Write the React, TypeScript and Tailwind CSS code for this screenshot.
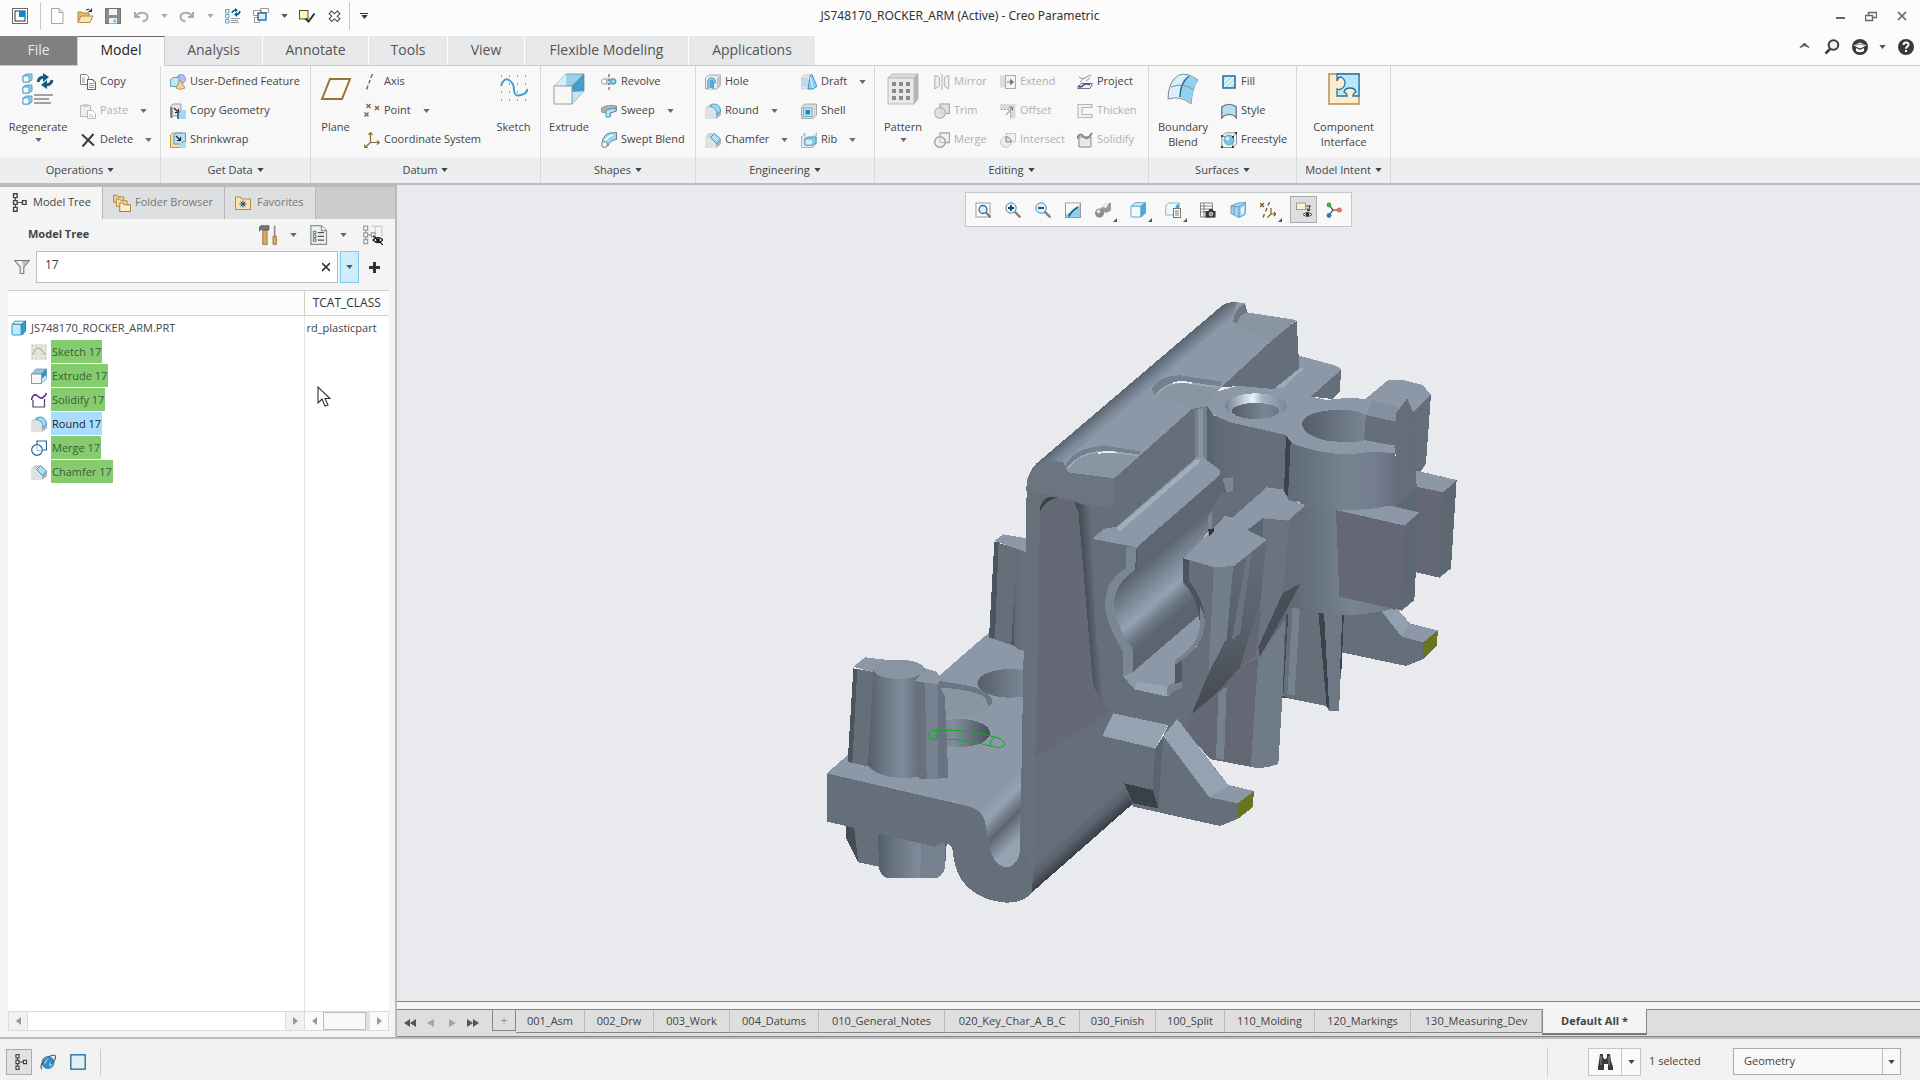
import React from "react";
import type { ReactNode } from "react";

/* ---------- small icons, 16 x 16 grid ---------- */

const icons: Record<string, ReactNode> = {
  app: (
    <>
      <rect x="0.5" y="0.5" width="15" height="15" fill="#fff" stroke="#6b6b6b" />
      <rect x="3" y="3" width="10" height="10" fill="none" stroke="#333" />
      <rect x="7" y="3" width="6" height="6" fill="#0a8ad6" />
    </>
  ),
  newFile: <path d="M2.500.5h7.500l4 4v11h-11.500zM10 .5v4h4" fill="#fff" stroke="#a5a5a5" />,
  open: (
    <>
      <path d="M1 14V4h4l1 1h6v3" fill="#e6bd73" stroke="#a98242" />
      <path d="M1 14.500 4 8h12l-3 6.500z" fill="#fbe3b0" stroke="#b08c4c" />
      <path d="M9 2q3-2 5 1M14.500.5v3h-3" fill="none" stroke="#222" />
    </>
  ),
  save: (
    <>
      <path d="M.5.5h15v15h-15z" fill="#8b8b8b" stroke="#707070" />
      <path d="M4 1h8v6H4z" fill="#f3f3f3" />
      <path d="M4 10h8v5.500H4z" fill="#e8f5fb" />
      <path d="M8.500 11.500h2.500v3H8.500z" fill="#7ebbe0" />
    </>
  ),
  undo: <path d="M2 4v5h5M3 8C6 3 14 4 14.500 8.500c0 3-2 4.500-5 5" fill="none" stroke="#aaa" strokeWidth="2" />,
  redo: <path d="M14 4v5H9M13 8C10 3 2 4 1.500 8.500c0 3 2 4.500 5 5" fill="none" stroke="#aaa" strokeWidth="2" />,
  regen: (
    <>
      <path d="M.5 1.500h3.500v3.500H.5zM.5 6.500h3.500V10H.5zM.5 11.500h3.500V15H.5z" fill="#dff3fd" stroke="#3d93bd" strokeWidth=".8" />
      <path d="M6 10.500h9M6 12.500h7M6 14.500h8" stroke="#999" />
      <path d="M7 5q1-3 4-3M15 3q-1 4-4 3.500" fill="none" stroke="#155a85" strokeWidth="1.600" />
      <path d="M10 0l3 2-3 2.500zM12 9 9 6.500l3-2.500z" fill="#155a85" />
    </>
  ),
  windows: (
    <>
      <path d="M.5 2.500h8v5h-8zM7.500.5h8v4h-8zM1.500 9.500h5v5h-5z" fill="#fff" stroke="#999" />
      <rect x="5" y="5" width="8" height="7" fill="#d4edfa" stroke="#1e5f8a" strokeWidth="1.300" />
    </>
  ),
  check: (
    <>
      <rect x=".5" y="2.500" width="8.500" height="8.500" fill="#fdf3bb" stroke="#5a4a2a" />
      <path d="M6.500 10.500l3 3 6-8" fill="none" stroke="#333" strokeWidth="1.900" />
    </>
  ),
  closeWin: (
    <>
      <path d="M3 4l9 8.500M12 4l-9 8.500" stroke="#444" strokeWidth="4.600" />
      <path d="M3.800 4.700l7.400 7.100M11.200 4.700l-7.400 7.100" stroke="#fff" strokeWidth="2.600" />
    </>
  ),
  copy: (
    <>
      <path d="M.5.5h6l2 2v8h-8z" fill="#fff" stroke="#777" strokeWidth=".9" />
      <path d="M2 4h3M2 6h3M2 8h3" stroke="#999" />
      <path d="M7.500 5.500h5l3 3v7h-8z" fill="#fff" stroke="#2a759e" strokeWidth="1.100" />
      <path d="M9 9.500h5M9 11.500h5M9 13.500h5" stroke="#6da8c6" />
    </>
  ),
  paste: (
    <>
      <path d="M.5 2.500h10v11H.5z" fill="#eee" stroke="#bbb" />
      <path d="M3 1h5v3H3z" fill="#ccc" />
      <path d="M7.500 7.500h5l3 3v5h-8z" fill="#fff" stroke="#bbb" />
      <path d="M9 11.500h4M9 13.500h5" stroke="#ccc" />
    </>
  ),
  del: <path d="M2 2.500l12 11M13.500 2 2.500 14.500" stroke="#3a3a3a" strokeWidth="2" />,
  udf: (
    <>
      <circle cx="11" cy="5" r="4.500" fill="#b8bdf0" stroke="#7379b8" strokeWidth=".7" />
      <path d="M.5 5.500 3 3.500h6v6l-2 3H.5z" fill="#bfe6f8" stroke="#4d94b8" strokeWidth=".8" />
      <path d="M10 6l5 8q-4.500 3-9 0z" fill="#f2d59d" stroke="#a98242" strokeWidth=".8" />
    </>
  ),
  copyGeom: (
    <>
      <path d="M.5 3.500 3 1h8v8H9v4H.5z" fill="#e3e6e8" stroke="#888" strokeWidth=".8" />
      <path d="M.5 4v11h2V4z" fill="#777" />
      <path d="M4 5l4 4M8.500 6v3.500H5" stroke="#222" strokeWidth="1.200" fill="none" />
      <path d="M8 10h3V7h5v9H8z" fill="#9fdbf8" />
      <path d="M8 8v8" stroke="#155a85" strokeWidth="1.500" />
    </>
  ),
  shrink: (
    <>
      <path d="M.5 3 3 1h9v12l-2 2.500H.5z" fill="#fbdc9c" stroke="#b48b42" strokeWidth=".9" />
      <path d="M4 3l2-2h9.500v9H12v2H4z" fill="#b4e1f6" stroke="#3884aa" strokeWidth=".8" />
      <path d="M6 4l4 4M10.500 5v3.500H7" stroke="#123" strokeWidth="1.200" fill="none" />
      <path d="M10 11h6v5h-6z" fill="#9fe0fb" />
    </>
  ),
  axis: <path d="M8.500 0l-1.700 4M6.200 6l-1.400 3.500M4 11.500 2.500 15.500" stroke="#7d5d28" strokeWidth="1.300" />,
  point: (
    <path d="M2.500 1l4 4M6.500 1l-4 4M11 3l4 4M15 3l-4 4M.5 9.500l4 4M4.500 9.500l-4 4" stroke="#8a6a35" strokeWidth="1.500" />
  ),
  csys: (
    <path d="M6.500 1v9.500H15M6.500 10.500l-5.500 5M4.500 3l2-2.500 2 2.500M13 8.500l2.500 2-2.500 2M.8 12.500v3h3.200" stroke="#8a6a35" strokeWidth="1.200" fill="none" />
  ),
  revolve: (
    <>
      <path d="M3 5q5-3 10 0v5q-5 2-10 0z" fill="#c3ced4" />
      <circle cx="3.200" cy="7.500" r="2.700" fill="#fff" stroke="#999" />
      <circle cx="12.300" cy="7.500" r="2.700" fill="#8bd4f7" stroke="#2a86b5" />
      <path d="M8 0v3M8 5v2M8 9v2M8 13v3" stroke="#444" />
    </>
  ),
  sweep: (
    <>
      <path d="M.5 5q6-4 15-2v5l-6 2v3H6v-3L.5 9z" fill="#a9b3b9" stroke="#7c878d" strokeWidth=".8" />
      <path d="M5 7l10-2v3l-6 2v4H5z" fill="#b9e5f9" stroke="#3b7f9f" strokeWidth=".8" />
    </>
  ),
  sweptBlend: (
    <>
      <path d="M1 10Q3 2 9 1l6.500-.5v7Q9 8 7 14z" fill="#9ed6f2" stroke="#5a7a8a" strokeWidth=".9" />
      <path d="M3 11Q6 4 12 3" fill="none" stroke="#fff" strokeWidth="1.500" />
      <circle cx="3.500" cy="12.500" r="2.900" fill="#f3f3f3" stroke="#777" />
    </>
  ),
  hole: (
    <>
      <path d="M.5 4 4 1h11.500v10L12 15H.5z" fill="#e7e9ea" stroke="#999" strokeWidth=".8" />
      <path d="M12 4v11l3.500-4V1z" fill="#c3c7ca" />
      <path d="M3 15V6q3-4 7 0v3H8v6" fill="#c7ebfb" stroke="#2a86b5" />
      <path d="M5 14V6h3v8" fill="#5eb6e0" stroke="#2a86b5" strokeWidth=".6" />
    </>
  ),
  round: (
    <>
      <path d="M0 5h8q3 1 3 5v6H0z" fill="#e0e1e2" />
      <path d="M0 5l5-4h4L7 5z" fill="#cfd2d4" />
      <path d="M11 11l5-4v5l-5 4z" fill="#adb4b9" />
      <path d="M5 3q2-2.500 5-2 5.500 1.500 5.500 7L12 11.500Q12 5 5 3z" fill="#9cdaf7" stroke="#2a86b5" strokeWidth=".8" />
    </>
  ),
  chamfer: (
    <>
      <path d="M0 5h6l5 6v5H0z" fill="#e0e1e2" />
      <path d="M0 5l4-4h5L6 5z" fill="#cfd2d4" />
      <path d="M11 11l5-4v5l-5 4z" fill="#adb4b9" />
      <path d="M9.500 1.500 15.500 7l-4 4.500L5.500 5.500z" fill="#a6e3fb" stroke="#2a86b5" strokeWidth=".9" />
    </>
  ),
  draft: (
    <>
      <path d="M0 4 4 0h5v15H0z" fill="#e1e4e6" stroke="#bbb" strokeWidth=".6" />
      <path d="M0 4h7v9H0z" fill="#bcdbeb" />
      <path d="M9 2l2-1.500 5 12-4 2.500H7z" fill="#87cef2" stroke="#2a86b5" strokeWidth=".8" />
      <path d="M9 3l3 11" stroke="#e7f8ff" />
    </>
  ),
  shell: (
    <>
      <path d="M.5 4 4 1h11.500v11L12 15.500H.5z" fill="#d9dcdd" stroke="#999" strokeWidth=".8" />
      <rect x="2.500" y="5" width="8.500" height="8.500" fill="#bfe8fa" stroke="#6fb2d0" />
      <rect x="4.500" y="7" width="4.500" height="4.500" fill="#2e86ae" />
    </>
  ),
  rib: (
    <>
      <path d="M.5 5 4 1v10H16M.5 5v10.500H12L16 11V1l-4 3" fill="#dfe8ec" stroke="#888" strokeWidth=".9" strokeDasharray="1.500 1" />
      <path d="M4 7l3-2h8v6l-3 2H4z" fill="#8fd6f5" stroke="#3884aa" strokeWidth=".8" />
      <path d="M4 7h8v6H4z" fill="#c9effd" stroke="#3884aa" strokeWidth=".6" />
    </>
  ),
  mirror: (
    <>
      <path d="M.8 1.500Q5 2 5.500 4v8l-4.700 3zM14.800 1.500Q11 2 10.300 4v8l4.500 3z" fill="#eee" stroke="#b0b0b0" />
      <path d="M8 0v16" stroke="#b0b0b0" />
    </>
  ),
  trim: (
    <>
      <rect x="6" y="1" width="9.500" height="9.500" fill="#e0e0e0" stroke="#aaa" strokeWidth="1.200" />
      <circle cx="6" cy="10" r="5.300" fill="#ddd" fillOpacity=".8" stroke="#b5b5b5" strokeWidth="1.200" />
    </>
  ),
  merge: (
    <>
      <path d="M6 5V1h9.500v9.500h-4" fill="#f0f0f0" stroke="#aaa" strokeWidth="1.300" />
      <circle cx="6" cy="10" r="5.300" fill="#f0f0f0" stroke="#999" strokeWidth="1.300" />
      <path d="M6 5v5.500h5" fill="none" stroke="#bbb" />
    </>
  ),
  extend: (
    <>
      <rect x="0" y="1.500" width="7" height="12" fill="#dcdcdc" />
      <rect x="5.500" y="1.500" width="10" height="13" fill="#f2f2f2" stroke="#aaa" />
      <path d="M7 8h5M10.500 5.500 13.500 8l-3 2.500z" stroke="#777" fill="#777" />
    </>
  ),
  offset: (
    <>
      <path d="M0 1h15.500v14.500H10V6H0z" fill="#dadada" />
      <path d="M1 6.500h9.500v9" fill="none" stroke="#999" strokeDasharray="2 1" />
      <path d="M6 12l6-7M9 4h3.500v3.500" fill="none" stroke="#777" />
    </>
  ),
  intersect: (
    <>
      <path d="M6 5V1.500h9.500V10H11" fill="#f2f2f2" stroke="#c5c5c5" />
      <circle cx="6" cy="10" r="5.300" fill="#eee" stroke="#c5c5c5" />
      <path d="M6 4.700q5 .5 5.300 5.300H6z" fill="#ddd" stroke="#888" />
    </>
  ),
  project: (
    <>
      <path d="M2 3q3 3 6 1t6-3M3 8l3-3M9 7l4-3" fill="none" stroke="#888" strokeWidth=".9" />
      <path d="M.5 14.500 4 9.500h11.500L13 14.500z" fill="#f4f0f8" stroke="#777" />
      <path d="M1 12q3 2 5-.5t7-1" fill="none" stroke="#6b3fa0" strokeWidth="1.700" />
    </>
  ),
  thicken: <path d="M1 1.500h14v3H5v7h10v3H1z" fill="#f3f3f3" stroke="#b5b5b5" strokeWidth="1.100" />,
  solidifyGray: (
    <>
      <path d="M2 5v10h12V5z" fill="#e8e8e8" stroke="#888" />
      <path d="M0 7q2-6 5-4 4 5 7 2l3-4" fill="none" stroke="#888" strokeWidth="2" />
    </>
  ),
  fill: (
    <>
      <rect x="2" y="2" width="12" height="12" fill="#bfe4f6" stroke="#1e5f8a" strokeWidth="1.400" />
      <path d="M3 8l5-5M3 13 13 3M8 13l5-5" stroke="#fff" />
    </>
  ),
  style: <path d="M.8 4Q8-1.500 15.200 4v11q-2.500-3.500-7-3.500t-7.400 3.500z" fill="#b3dff5" stroke="#666" strokeWidth="1.200" />,
  freestyle: (
    <>
      <path d="M.8 4.500 4.500.8h11v11l-3.700 3.700h-11zM.8 4.500h11v11M11.800 4.500 15.500.8" fill="#f5f5f5" stroke="#777" strokeWidth=".8" />
      <circle cx="8" cy="8" r="5" fill="#7fc1e2" stroke="#4a95ba" strokeWidth=".7" />
      <circle cx="6.500" cy="6.500" r="2" fill="#cdeaf8" />
      <path d="M0 4h2M0 15h2M14 1h2M11 15h2M11 5h2" stroke="#111" strokeWidth="1.500" />
    </>
  ),
  tree: (
    <>
      <path d="M4.500 4v2.500M4.500 9.500V12M6 8h5" stroke="#444" />
      <path d="M3 .7h3v3.200H3zM3 6.400h3v3.200H3zM3 12.100h3v3.200H3zM10.500 6.400h3v3.200h-3z" fill="#fff" stroke="#444" strokeWidth="1.200" />
    </>
  ),
  folders: (
    <>
      <path d="M.5 7.500V1h3l1 1.500h5v5z" fill="#f3cf8a" stroke="#a98242" strokeWidth=".8" />
      <path d="M3 11V4.500h3L7 6h5.500v5z" fill="#f8dfa8" stroke="#a98242" strokeWidth=".8" />
      <path d="M6 15.500V8h3l1 1.500h5.500v6z" fill="#fdedc8" stroke="#a98242" strokeWidth=".9" />
    </>
  ),
  favorites: (
    <>
      <path d="M.5 14.500V2h5l1 2h9v10.500z" fill="#fbe3b0" stroke="#a98242" strokeWidth=".9" />
      <path d="M8 5.500v7M4.500 9h7M5.500 6.500l5 5M10.500 6.500l-5 5" stroke="#174a78" />
    </>
  ),
  tools: (
    <>
      <path d="M3 4h3.500v11.800H3z" fill="#d9a965" stroke="#9b7238" strokeWidth=".7" />
      <path d="M0 2Q1 0 4 .5h4v3.500H4Q1 3 0 5z" fill="#777" stroke="#555" strokeWidth=".6" />
      <path d="M12.500 .5v9" stroke="#888" strokeWidth="1.300" />
      <path d="M11.200 9h2.700v6.500h-2.700z" fill="#d9a965" stroke="#9b7238" strokeWidth=".7" />
    </>
  ),
  list: (
    <>
      <path d="M1.500.5h8.500l4 4v11H1.500z" fill="#eef1f3" stroke="#85929a" />
      <path d="M10 .5v4h4" fill="#fff" stroke="#85929a" />
      <path d="M7 6h5M7 9h5M7 12h5" stroke="#555" />
      <path d="M3.500 5h2v2h-2zM3.500 8h2v2h-2zM3.500 11h2v2h-2z" fill="#fff" stroke="#555" strokeWidth=".7" />
    </>
  ),
  hideTree: (
    <>
      <path d="M7 1h8v8M10 1v6M15 1v6" fill="none" stroke="#ccc" />
      <path d="M.7.800h3v3.200h-3zM.7 6.200h3v3.200h-3zM.7 11.700h3v3.200h-3zM6.700 6.200h3v3.200h-3zM4.200 7.800h2.500M2.200 4v2M2.200 9.500v2" fill="#fff" stroke="#999" />
      <path d="M8 12q4-4 8 0-4 4-8 0z" fill="#fff" stroke="#111" />
      <circle cx="12" cy="12" r="1.500" fill="#111" />
      <path d="M8 8.500l8 7.500" stroke="#111" />
    </>
  ),
  funnel: (
    <>
      <path d="M.8 1.500h14.400L9.800 8v6.500H6.200V8z" fill="#f0f0f0" stroke="#777" strokeWidth="1.100" />
      <path d="M8 2h6L9 7.500z" fill="#bbb" />
    </>
  ),
  part: (
    <>
      <path d="M1 5q0-1 1-1h8v11H2q-1 0-1-1z" fill="#bdebfc" stroke="#2a86b5" strokeWidth=".9" />
      <path d="M1.500 4 4 1.200h10.500L11 4.200z" fill="#ddf6ff" stroke="#2a86b5" strokeWidth=".9" />
      <path d="M10.800 4.200l3.700-3v9.500L11 15z" fill="#3ba0d4" stroke="#1d6f9c" strokeWidth=".9" />
    </>
  ),
  sketchGray: (
    <>
      <rect width="16" height="16" fill="#e6e6e3" />
      <path d="M1 2h1M5 2h1M10 2h1M14 2h1M1 6h1M14 6h1M1 10h1M5 10h1M10 10h1M14 10h1M1 14h1M5 14h1M10 14h1M14 14h1" stroke="#aaa" />
      <path d="M1.500 11Q4 4 7 4T14.500 11" fill="none" stroke="#bcb9a4" strokeWidth="1.500" />
    </>
  ),
  extrude: (
    <>
      <path d="M5 1h10.500L11 6H0.500z" fill="#8ec8e6" stroke="#4f7f99" strokeWidth=".6" />
      <path d="M15.500 1v10L10.500 15.500V6z" fill="#3b8fbd" stroke="#4f7f99" strokeWidth=".6" />
      <path d="M10 11l5.500-4v4L10.500 15.500z" fill="#bfe6f8" />
      <path d="M.5 6h10v9.500H.5z" fill="#f7f7f7" stroke="#8a8a8a" strokeWidth=".9" />
    </>
  ),
  solidify: (
    <>
      <path d="M2 8v7h11.500V7" fill="#fff" stroke="#54406f" strokeWidth="1.200" />
      <path d="M.5 8q1-6 5-5 5 5 7 2 2-1 3-4" fill="none" stroke="#5a2d8c" strokeWidth="1.600" />
    </>
  ),
  mergeBlue: (
    <>
      <path d="M6 5V1h9.500v9H11.500" fill="#fff" stroke="#27699b" strokeWidth="1.200" />
      <circle cx="6" cy="10" r="5.300" fill="#fff" stroke="#27699b" strokeWidth="1.200" />
      <path d="M6 5v5.500h5" fill="none" stroke="#9cc1d8" />
    </>
  ),
  zoomFit: (
    <>
      <rect x="1" y="1" width="14" height="14" fill="#fff" stroke="#999" />
      <circle cx="8" cy="7.500" r="4" fill="#ddf0fa" stroke="#27699b" strokeWidth="1.300" />
      <path d="M11 10.500l4.500 5" stroke="#777" strokeWidth="2" />
    </>
  ),
  zoomIn: (
    <>
      <path d="M9.500 9.500l6 6" stroke="#888" strokeWidth="2.500" />
      <circle cx="6" cy="6" r="5.200" fill="#e4f4fc" stroke="#4b8db3" />
      <path d="M6 3v6M3 6h6" stroke="#123f66" strokeWidth="1.800" />
    </>
  ),
  zoomOut: (
    <>
      <path d="M9.500 9.500l6 6" stroke="#888" strokeWidth="2.500" />
      <circle cx="6" cy="6" r="5.200" fill="#e4f4fc" stroke="#4b8db3" />
      <path d="M3 6h6" stroke="#123f66" strokeWidth="1.800" />
    </>
  ),
  repaint: (
    <>
      <rect x=".5" y="1" width="15" height="14.500" fill="#8fcdea" stroke="#999" />
      <path d="M1 1.500h14Q13 9 1 12z" fill="#f2fafd" />
      <path d="M4 14.500Q5 10 13 5" fill="none" stroke="#155a85" strokeWidth="1.700" />
    </>
  ),
  shading: (
    <>
      <path d="M6 6l4-5h6v7q-4 5-9 1z" fill="#9a9a9a" />
      <path d="M7 5l3-4h4l-3 5z" fill="#eee" />
      <circle cx="4.500" cy="11" r="4.500" fill="#8a8a8a" />
      <circle cx="3.500" cy="9.500" r="2" fill="#ddd" />
    </>
  ),
  views: (
    <>
      <path d="M1 5q0-1 1-1h9v11H2q-1 0-1-1z" fill="#f3fbff" stroke="#4f9fc8" strokeWidth=".9" />
      <path d="M1.500 4 5 .8h10.200L11 4.200z" fill="#d3effb" stroke="#4f9fc8" strokeWidth=".9" />
      <path d="M11 4.200 15.500.8V11L11 15z" fill="#4ba9d7" stroke="#4f9fc8" strokeWidth=".9" />
    </>
  ),
  viewList: (
    <>
      <path d="M.7 4 3.500 1h11L11 4v9H.7z" fill="#effaff" stroke="#6fb2d3" strokeWidth=".9" />
      <path d="M11 4l3.500-3v6H11z" fill="#4ba9d7" />
      <rect x="8.500" y="6.500" width="7" height="9" fill="#fff" stroke="#777" />
      <path d="M10 9h4M10 11h4M10 13h4" stroke="#777" />
    </>
  ),
  camera: (
    <>
      <path d="M.5 1h12v14H.5zM.5 4h12M.5 7h12M.5 10h12M4 1v14" fill="#fff" stroke="#777" strokeWidth=".9" />
      <path d="M5.500 9h3l1-2h3l1 2h2v6.500h-10z" fill="#333" />
      <circle cx="11" cy="12" r="2" fill="#999" stroke="#ddd" strokeWidth=".7" />
    </>
  ),
  persp: (
    <>
      <path d="M1 4l7-3 8-.5-1 12-6 3-8-4z" fill="#a5d4ed" stroke="#4a8fb5" strokeWidth=".8" />
      <path d="M1 4l8 1 7-4M9 5v10M4 4.500v8" fill="none" stroke="#4a8fb5" strokeWidth=".8" />
      <path d="M11 6l3-2v7l-3 2z" fill="#e7f6fd" />
    </>
  ),
  datums: (
    <>
      <path d="M0 1l4 4M4 1 0 5M9.500 0 8 3.500M7 6 5.500 9.500M4.500 12 3 15.500" stroke="#7d5d28" strokeWidth="1.400" />
      <path d="M11 6v6h5M11 12l-3.500 3.500M14 10l2 2-2 2" fill="none" stroke="#7d5d28" strokeWidth="1.200" />
    </>
  ),
  annot: (
    <>
      <rect x=".5" y="1" width="9" height="6.500" fill="#fdf1d0" stroke="#999" />
      <path d="M10 4h5M14 4l-2 5M11 6.500l1 2.500 2.500-1.500" fill="none" stroke="#444" strokeWidth="1.100" />
      <path d="M7 12.500q4.500-4 9 0-4.500 4-9 0z" fill="#fff" stroke="#444" />
      <circle cx="11.500" cy="12.500" r="1.800" fill="#222" />
    </>
  ),
  spin: (
    <>
      <path d="M3 3l4 5-4 5M7 8h6" fill="none" stroke="#333" strokeWidth="1.200" />
      <circle cx="3" cy="3" r="2.400" fill="#4da04d" />
      <circle cx="3" cy="13.500" r="2.400" fill="#2c7cc0" />
      <circle cx="13.300" cy="8" r="2.500" fill="#e0705c" />
    </>
  ),
  globe: (
    <>
      <circle cx="8" cy="8.500" r="6.500" fill="#2b8fce" />
      <path d="M4 5q3-3 5-1L7 7 5 10 3 8zM10 8l3 1-2 4-2-2z" fill="#8fd0f0" />
      <path d="M2 15Q-1 12 5 6T15 1.500Q17 5 11 10" fill="none" stroke="#555" strokeWidth="1.100" />
    </>
  ),
  binoculars: (
    <>
      <path d="M3 0h3v3l1 2h2l1-2V0h3l1 7 2 6v3h-5v-6H7v6H1v-3l1-6z" fill="#3a3a3a" />
      <path d="M4 2v9M12 2v9" stroke="#aaa" strokeWidth=".8" />
    </>
  ),
};

const Icon = ({ name, size = 16 }: { name: string; size?: number }) => (
  <svg width={size} height={size} viewBox="0 0 16 16" className="shrink-0" aria-hidden="true">
    {icons[name]}
  </svg>
);

/* ---------- large ribbon icons, 32 x 32 grid ---------- */

const bigIcons: Record<string, ReactNode> = {
  regenerate: (
    <>
      {[1, 12, 23].map((y) => (
        <g key={y} stroke="#3d93bd" strokeWidth=".8">
          <path d={`M1 ${y + 2}l3-2h6v6l-3 2H1z`} fill="#8fd0f0" />
          <path d={`M1 ${y + 2}h6v6H1z`} fill="#f3fbff" />
        </g>
      ))}
      <path d="M12 22h19M12 26h15M12 30h17" stroke="#a0a3a6" strokeWidth="2" />
      <path d="M16 9q1-5 6-5M30 7q-1 5-6 5" fill="none" stroke="#155a85" strokeWidth="3" />
      <path d="M21 0l6 4-6 5zM25 16l-6-4 6-5z" fill="#155a85" />
    </>
  ),
  plane: <path d="M2 26 10 6h20l-8 20z" fill="#fdfaf3" stroke="#96733a" strokeWidth="2" />,
  sketch: (
    <>
      {[3, 11, 19, 27].map((y) => (
        <path key={y} d={`M3 ${y}h25`} stroke="#444" strokeDasharray="1 7" />
      ))}
      <path d="M3 13Q6 4 11 7t5 10 7 5 6-6" fill="none" stroke="#3f9fd6" strokeWidth="2" />
    </>
  ),
  extrude: (
    <>
      <path d="M13 1h18L19 13H1z" fill="#9ccfe9" stroke="#5c8ba5" strokeWidth=".7" />
      <path d="M31 1v17L19 31V13z" fill="#4a9cc8" stroke="#5c8ba5" strokeWidth=".7" />
      <path d="M19 19l12 -1L19 31z" fill="#bfe5f7" />
      <path d="M13 1v12H1z" fill="#d8effa" />
      <path d="M1 13h18v18H1z" fill="#f7f7f7" stroke="#999" />
    </>
  ),
  pattern: (
    <>
      <path d="M1 5 5 1h26l-4 4z" fill="#ddd" stroke="#aaa" strokeWidth=".7" />
      <path d="M27 5l4-4v25l-4 5z" fill="#b5b5b5" stroke="#aaa" strokeWidth=".7" />
      <path d="M1 5h26v26H1z" fill="#e9e9e9" stroke="#bbb" />
      <path d="M5 9h4v4H5zM12 9h4v4h-4zM19 9h4v4h-4zM5 16h4v4H5zM12 16h4v4h-4zM19 16h4v4h-4zM5 23h4v4H5zM12 23h4v4h-4zM19 23h4v4h-4z" fill="#8a8a8a" />
    </>
  ),
  boundary: (
    <>
      <path d="M1 26Q1 8 12 2q8-3 19 5-6 8-7 24Q14 22 1 26z" fill="#d9f1fc" stroke="#888" />
      <path d="M13 24q0-14 9-21 5 1 9 5-6 8-7 23-6-6-11-7z" fill="#8fd2f2" />
      <path d="M13 24q0-14 9-21" fill="none" stroke="#27699b" strokeWidth="1.500" />
      <path d="M4 14q12-5 23 3" fill="none" stroke="#888" />
    </>
  ),
  component: (
    <>
      <path d="M1 1h30v30H1z" fill="#fdeccf" stroke="#b08c4c" strokeWidth="1.400" />
      <path d="M9 1h22v22h-6q0-3 3-4-1-4-6-4t-6 4q3 1 3 4H9v-7q2 1 4 0 4-2 4-6t-4-6q-3 0-4 4z" fill="#b9e8fb" stroke="#2a759e" strokeWidth="1.300" />
    </>
  ),
};

const BigIcon = ({ name }: { name: string }) => (
  <svg width="32" height="32" viewBox="0 0 32 32" aria-hidden="true">
    {bigIcons[name]}
  </svg>
);

const Arrow = () => (
  <svg width="7" height="4" viewBox="0 0 8 5" className="shrink-0 fill-current" aria-hidden="true">
    <path d="M0 0h8L4 5z" />
  </svg>
);

/* ---------- ribbon ---------- */

type Command = { label: string; icon: string; arrow?: boolean; off?: boolean };

const Col = ({ items, className }: { items: Command[]; className: string }) => (
  <div className={`flex flex-col items-start ${className}`}>
    {items.map((c) => (
      <button
        key={c.label}
        disabled={c.off}
        className="flex h-[29px] items-center gap-1 whitespace-nowrap disabled:text-[#b0b0b0]"
      >
        <Icon name={c.icon} />
        <span>{c.label}</span>
        {c.arrow && (
          <span className="ml-2 text-[#6a6a6a]">
            <Arrow />
          </span>
        )}
      </button>
    ))}
  </div>
);

const Big = ({ icon, lines, arrow, className }: { icon: string; lines: string[]; arrow?: boolean; className: string }) => (
  <button className={`flex shrink-0 flex-col items-center pt-1.5 ${className}`}>
    <BigIcon name={icon} />
    <span className="mt-3.5 flex flex-col whitespace-nowrap leading-[15px]">
      {lines.map((l) => (
        <span key={l}>{l}</span>
      ))}
    </span>
    {arrow && (
      <span className="mt-1 text-[#6a6a6a]">
        <Arrow />
      </span>
    )}
  </button>
);

const Group = ({ title, className, children }: { title: string; className: string; children: ReactNode }) => (
  <section className={`flex shrink-0 flex-col border-r border-[#d6d8da] ${className}`}>
    <div className="flex h-[91px] pt-px">{children}</div>
    <button className="flex h-[26px] items-center justify-center gap-1 bg-[#eceef0]">
      {title}
      <Arrow />
    </button>
  </section>
);

const ribbonTabs = [
  { label: "Analysis", w: "w-[98px]" },
  { label: "Annotate", w: "w-[106px]" },
  { label: "Tools", w: "w-[79px]" },
  { label: "View", w: "w-[77px]" },
  { label: "Flexible Modeling", w: "w-[164px]" },
  { label: "Applications", w: "w-[127px]" },
];

const Qat = ({ name, className = "w-7" }: { name: string; className?: string }) => (
  <button className={`flex justify-center ${className}`} aria-label={name}>
    <Icon name={name} />
  </button>
);

const QatArrow = ({ className = "" }: { className?: string }) => (
  <button className={`flex w-[18px] justify-center ${className}`} aria-label="More">
    <Arrow />
  </button>
);

const TitleBar = () => (
  <header className="grid h-9 grid-cols-[1fr_auto_1fr] items-start bg-[#fcfcfc]">
    <div className="flex h-8 items-center text-[#555]">
      <Qat name="app" className="w-10" />
      <span className="mr-0.5 h-7 w-px bg-[#c8c8c8]" />
      <Qat name="newFile" />
      <Qat name="open" />
      <Qat name="save" />
      <Qat name="undo" />
      <QatArrow className="text-[#aaa]" />
      <Qat name="redo" />
      <QatArrow className="text-[#aaa]" />
      <Qat name="regen" />
      <Qat name="windows" />
      <QatArrow />
      <Qat name="check" />
      <Qat name="closeWin" />
      <span className="mr-1 h-7 w-px bg-[#c8c8c8]" />
      <button className="flex w-5 flex-col items-center gap-px text-[#333]" aria-label="Customize toolbar">
        <span className="h-px w-2 bg-[#333]" />
        <Arrow />
      </button>
    </div>
    <h1 className="h-8 font-['Noto_Sans','Open_Sans',sans-serif] text-[12px] leading-8 text-[#333]">
      JS748170_ROCKER_ARM (Active) - Creo Parametric
    </h1>
    <div className="flex h-8 items-center justify-end gap-[19px] pr-3">
      <button aria-label="Minimize">
        <svg width="12" height="12" viewBox="0 0 12 12">
          <path d="M2 8h9" stroke="#666" strokeWidth="2" />
        </svg>
      </button>
      <button aria-label="Restore">
        <svg width="12" height="12" viewBox="0 0 12 12">
          <path d="M.5 5.500h7v5h-7zM3.500 5V2.500h8v5H8" fill="none" stroke="#666" strokeWidth="1.400" />
        </svg>
      </button>
      <button aria-label="Close">
        <svg width="12" height="12" viewBox="0 0 12 12">
          <path d="M2 2l8 8M10 2l-8 8" stroke="#666" strokeWidth="1.700" />
        </svg>
      </button>
    </div>
  </header>
);

const RibbonTabs = () => (
  <nav className="flex h-[30px] items-stretch border-b border-[#c9cbcc] bg-[#fcfcfc] text-[14px] text-[#555]">
    <button className="w-[77px] bg-[#808080] pb-0.5 text-[#e8e8e8]">File</button>
    <button className="-mb-px w-[88px] border-x border-t border-x-[#c9cbcc] border-t-[#666] bg-[#fafafa] pb-1 text-[#222]">
      Model
    </button>
    {ribbonTabs.map((t) => (
      <button key={t.label} className={`border-r border-white bg-[#e6e8ea] pb-0.5 ${t.w}`}>
        {t.label}
      </button>
    ))}
    <div className="ml-auto flex items-center pb-2 pr-1.5 text-[#555]">
      <button className="mr-3.5" aria-label="Collapse ribbon">
        <svg width="11" height="10" viewBox="0 0 11 10">
          <path d="M1 5.500l4.500-4.500L10 5.500l-4.500-2z" fill="#555" stroke="#555" />
        </svg>
      </button>
      <button className="mr-3" aria-label="Search">
        <svg width="16" height="16" viewBox="0 0 16 16">
          <circle cx="9.500" cy="6" r="4.800" fill="#eef4fa" stroke="#3a3a3a" strokeWidth="2" />
          <path d="M6 10l-4.500 4.500" stroke="#3a3a3a" strokeWidth="2.500" />
        </svg>
      </button>
      <button className="mr-[11px]" aria-label="Learning">
        <svg width="16" height="16" viewBox="0 0 16 16">
          <circle cx="8" cy="8" r="8" fill="#3a3a3a" />
          <path d="M1.500 6.500 8 3.500l6.500 3L8 9.500zM4 9v3q4 2.500 8 0V9l-4 2z" fill="#fff" />
          <path d="M3 6.500 8 5l5 1.500" fill="none" stroke="#3a3a3a" strokeWidth=".6" />
        </svg>
      </button>
      <button className="mr-3" aria-label="More">
        <Arrow />
      </button>
      <button aria-label="Help">
        <svg width="16" height="16" viewBox="0 0 16 16">
          <circle cx="8" cy="8" r="8" fill="#3a3a3a" />
          <path d="M5.500 6q0-2.500 2.500-2.500t2.500 2.300q0 1.200-1.300 1.900T8 9.800" fill="none" stroke="#fff" strokeWidth="1.900" />
          <path d="M7 11h2v2H7z" fill="#fff" />
        </svg>
      </button>
    </div>
  </nav>
);

const Ribbon = () => (
  <div className="flex border-b-2 border-[#b9bbbc] bg-[linear-gradient(to_bottom,#f8f8f8_91px,#eceef0_91px)]">
    <Group title="Operations" className="w-[161px]">
      <Big icon="regenerate" lines={["Regenerate"]} arrow className="w-[76px]" />
      <Col
        className="pl-1"
        items={[
          { label: "Copy", icon: "copy" },
          { label: "Paste", icon: "paste", arrow: true, off: true },
          { label: "Delete", icon: "del", arrow: true },
        ]}
      />
    </Group>
    <Group title="Get Data" className="w-[150px]">
      <Col
        className="pl-[9px]"
        items={[
          { label: "User-Defined Feature", icon: "udf" },
          { label: "Copy Geometry", icon: "copyGeom" },
          { label: "Shrinkwrap", icon: "shrink" },
        ]}
      />
    </Group>
    <Group title="Datum" className="w-[230px]">
      <Big icon="plane" lines={["Plane"]} className="w-[49px]" />
      <Col
        className="w-[129px] pl-1"
        items={[
          { label: "Axis", icon: "axis" },
          { label: "Point", icon: "point", arrow: true },
          { label: "Coordinate System", icon: "csys" },
        ]}
      />
      <Big icon="sketch" lines={["Sketch"]} className="w-[49px]" />
    </Group>
    <Group title="Shapes" className="w-[155px]">
      <Big icon="extrude" lines={["Extrude"]} className="w-[56px]" />
      <Col
        className="pl-1"
        items={[
          { label: "Revolve", icon: "revolve" },
          { label: "Sweep", icon: "sweep", arrow: true },
          { label: "Swept Blend", icon: "sweptBlend" },
        ]}
      />
    </Group>
    <Group title="Engineering" className="w-[179px]">
      <Col
        className="w-[105px] pl-[9px]"
        items={[
          { label: "Hole", icon: "hole" },
          { label: "Round", icon: "round", arrow: true },
          { label: "Chamfer", icon: "chamfer", arrow: true },
        ]}
      />
      <Col
        className=""
        items={[
          { label: "Draft", icon: "draft", arrow: true },
          { label: "Shell", icon: "shell" },
          { label: "Rib", icon: "rib", arrow: true },
        ]}
      />
    </Group>
    <Group title="Editing" className="w-[274px]">
      <Big icon="pattern" lines={["Pattern"]} arrow className="w-[56px]" />
      <Col
        className="w-[69px] pl-[3px]"
        items={[
          { label: "Mirror", icon: "mirror", off: true },
          { label: "Trim", icon: "trim", off: true },
          { label: "Merge", icon: "merge", off: true },
        ]}
      />
      <Col
        className="w-[77px]"
        items={[
          { label: "Extend", icon: "extend", off: true },
          { label: "Offset", icon: "offset", off: true },
          { label: "Intersect", icon: "intersect", off: true },
        ]}
      />
      <Col
        className=""
        items={[
          { label: "Project", icon: "project" },
          { label: "Thicken", icon: "thicken", off: true },
          { label: "Solidify", icon: "solidifyGray", off: true },
        ]}
      />
    </Group>
    <Group title="Surfaces" className="w-[148px]">
      <Big icon="boundary" lines={["Boundary", "Blend"]} className="w-[68px]" />
      <Col
        className="pl-1"
        items={[
          { label: "Fill", icon: "fill" },
          { label: "Style", icon: "style" },
          { label: "Freestyle", icon: "freestyle" },
        ]}
      />
    </Group>
    <Group title="Model Intent" className="w-[94px]">
      <Big icon="component" lines={["Component", "Interface"]} className="w-full" />
    </Group>
  </div>
);

/* ---------- model tree ---------- */

const features = [
  { label: "Sketch 17", icon: "sketchGray" },
  { label: "Extrude 17", icon: "extrude" },
  { label: "Solidify 17", icon: "solidify" },
  { label: "Round 17", icon: "round", active: true },
  { label: "Merge 17", icon: "mergeBlue" },
  { label: "Chamfer 17", icon: "chamfer" },
];

const ScrollArrow = ({ right }: { right?: boolean }) => (
  <button className="flex w-[18px] items-center justify-center text-[#999]" aria-label={right ? "Scroll right" : "Scroll left"}>
    <svg width="5" height="8" viewBox="0 0 5 8" className="fill-current">
      <path d={right ? "M0 0v8l5-4z" : "M5 0v8L0 4z"} />
    </svg>
  </button>
);

const TreePanel = () => (
  <aside className="flex w-[395px] shrink-0 flex-col bg-[#f4f4f4]">
    <div className="flex h-[34px] items-stretch border-t-2 border-[#b9bbbc] bg-[#cbcccd] text-[#777]">
      <button className="flex w-[103px] items-center gap-1 border-r border-[#b5b6b7] bg-[#f4f4f4] pb-px pl-2.5 text-[#444]">
        <Icon name="tree" size={19} />
        <span>Model Tree</span>
      </button>
      <button className="flex w-[122px] items-center gap-1 border-r border-[#b5b6b7] bg-[#dedfe0] pb-px pl-2.5">
        <Icon name="folders" size={18} />
        <span>Folder Browser</span>
      </button>
      <button className="flex w-[91px] items-center gap-1.5 border-r border-[#b5b6b7] bg-[#dedfe0] pb-px pl-2.5">
        <Icon name="favorites" />
        <span>Favorites</span>
      </button>
    </div>
    <div className="flex h-8 items-center pb-px pl-7 pr-3 text-[#666]">
      <h2 className="mr-auto font-bold text-[#444]">Model Tree</h2>
      <button aria-label="Settings">
        <Icon name="tools" size={20} />
      </button>
      <button className="ml-[11px] mr-3" aria-label="Settings menu">
        <Arrow />
      </button>
      <button aria-label="Show">
        <Icon name="list" size={20} />
      </button>
      <button className="ml-[11px] mr-4" aria-label="Show menu">
        <Arrow />
      </button>
      <button aria-label="Hide tree items">
        <Icon name="hideTree" size={20} />
      </button>
    </div>
    <div className="flex h-8 items-center pl-3.5">
      <label htmlFor="tree-filter" aria-label="Filter">
        <Icon name="funnel" />
      </label>
      <div className="relative ml-1.5 h-full w-[302px]">
        <input
          id="tree-filter"
          defaultValue="17"
          className="h-full w-full border border-[#bbb] bg-white pb-1.5 pl-2 text-[12px] text-[#444] outline-none"
        />
        <button className="absolute right-2 top-2.5" aria-label="Clear">
          <svg width="8" height="11" viewBox="0 0 8 11">
            <path d="M0 2l8 8M8 2l-8 8" stroke="#333" strokeWidth="1.700" />
          </svg>
        </button>
      </div>
      <button className="ml-0.5 flex h-full w-[19px] items-center justify-center border border-[#84c6ea] bg-[#cdecfc] text-[#555]" aria-label="Filter options">
        <Arrow />
      </button>
      <button className="ml-2.5" aria-label="Add filter">
        <svg width="11" height="11" viewBox="0 0 11 11">
          <path d="M5.500 0v11M0 5.500h11" stroke="#333" strokeWidth="3" />
        </svg>
      </button>
    </div>
    <div className="ml-2 mr-1.5 mt-[7px] min-h-0 flex-1 bg-white">
      <table className="h-full w-full table-fixed border-collapse text-left">
        <thead>
          <tr className="h-[25px] border-y border-[#d0d0d0] bg-[#fcfcfc]">
            <th className="border-r border-[#d0d0d0]" aria-label="Feature" />
            <th className="w-[85px] p-0 text-center text-[12px] font-normal text-[#333]">TCAT_CLASS</th>
          </tr>
        </thead>
        <tbody>
          <tr className="h-6">
            <td className="border-r border-[#e2e4e6]">
              <span className="flex items-center gap-1 pl-[3px]">
                <Icon name="part" />
                JS748170_ROCKER_ARM.PRT
              </span>
            </td>
            <td className="pl-0.5">rd_plasticpart</td>
          </tr>
          {features.map((f) => (
            <tr key={f.label} className="h-6">
              <td className="border-r border-[#e2e4e6]">
                <span className="flex items-center gap-1 pl-[23px]">
                  <Icon name={f.icon} />
                  <span
                    className={`h-[23px] px-px leading-[23px] ${f.active ? "bg-[#a9dcff] text-[#222]" : "bg-[#84cc6e] text-[#3f5a3a]"}`}
                  >
                    {f.label}
                  </span>
                </span>
              </td>
              <td />
            </tr>
          ))}
          <tr>
            <td className="border-r border-[#e2e4e6]" />
            <td />
          </tr>
        </tbody>
      </table>
    </div>
    <div className="mb-1.5 ml-2 mr-1.5 flex h-5">
      <div className="flex flex-1 justify-between border border-[#d9dcdf] bg-[#f0f1f2]">
        <ScrollArrow />
        <span className="flex-1 border-x border-[#d9dcdf] bg-white" />
        <ScrollArrow right />
      </div>
      <div className="flex w-[84px] border border-l-0 border-[#d9dcdf] bg-[#fafafa]">
        <ScrollArrow />
        <span className="flex-1 border border-[#bbb] bg-[#f8f8f8]" />
        <span className="w-1 bg-[#dfe1e3]" />
        <ScrollArrow right />
      </div>
    </div>
  </aside>
);

/* ---------- 3D part ---------- */

const TOP = "#8c98a8";
const FRONT = "#646f79";
const SIDE = "#636874";
const LIGHT = "#95a2b2";
const DARK = "#3b434a";
const OLIVE = "#6b7521";

const P = ({ d, f }: { d: string; f: string }) => <polygon points={d} fill={f} />;

/* three local frames at a third of a pixel: upper body, lower left, clip area */
const UPPER = "translate(1000 280) scale(.33333)";
const LEFT = "translate(810 480) scale(.33333)";
const CLIP = "translate(1040 460) scale(.33333)";

const RockerArm = () => (
  <svg
    viewBox="397 185 1523 816"
    shapeRendering="crispEdges"
    className="absolute inset-0 h-full w-full"
    role="img"
    aria-label="Rocker arm part"
  >
    <defs>
      <linearGradient id="edge" gradientUnits="userSpaceOnUse" x1="368" y1="322" x2="412" y2="374">
        <stop offset="0" stopColor="#525d69" />
        <stop offset=".6" stopColor="#7f8b9a" />
        <stop offset="1" stopColor={TOP} />
      </linearGradient>
      <linearGradient id="cyl">
        <stop offset="0" stopColor="#5f6a75" />
        <stop offset=".25" stopColor="#687480" />
        <stop offset=".55" stopColor="#77838f" />
        <stop offset=".8" stopColor="#747e90" />
        <stop offset="1" stopColor="#666f7d" />
      </linearGradient>
      <linearGradient id="boss">
        <stop offset="0" stopColor="#434c55" />
        <stop offset=".25" stopColor="#5f6a74" />
        <stop offset=".5" stopColor="#646f79" />
        <stop offset="1" stopColor="#646f79" />
      </linearGradient>
      <linearGradient id="post">
        <stop offset="0" stopColor="#535e69" />
        <stop offset=".2" stopColor="#65717c" />
        <stop offset=".6" stopColor="#7f8b9a" />
        <stop offset="1" stopColor="#5c6671" />
      </linearGradient>
      <linearGradient id="bore">
        <stop offset="0" stopColor="#545e69" />
        <stop offset=".7" stopColor="#7a8694" />
        <stop offset="1" stopColor="#6b7582" />
      </linearGradient>
      <linearGradient id="socket">
        <stop offset="0" stopColor="#6b7683" />
        <stop offset=".4" stopColor="#818d9c" />
        <stop offset=".8" stopColor="#5d6772" />
        <stop offset="1" stopColor="#454e57" />
      </linearGradient>
      <linearGradient id="chan" gradientUnits="userSpaceOnUse" x1="330" y1="270" x2="460" y2="420">
        <stop offset="0" stopColor="#4f5863" />
        <stop offset=".35" stopColor="#76828f" />
        <stop offset=".65" stopColor={LIGHT} />
        <stop offset=".85" stopColor="#6c7784" />
        <stop offset="1" stopColor="#5c6470" />
      </linearGradient>
      <linearGradient id="bend" gradientUnits="userSpaceOnUse" x1="540" y1="960" x2="640" y2="1060">
        <stop offset="0" stopColor={TOP} />
        <stop offset=".25" stopColor={LIGHT} />
        <stop offset=".6" stopColor="#5d6670" />
        <stop offset="1" stopColor={LIGHT} />
      </linearGradient>
      <linearGradient id="heel" gradientUnits="userSpaceOnUse" x1="765" y1="1050" x2="818" y2="1110">
        <stop offset="0" stopColor={FRONT} />
        <stop offset=".5" stopColor="#5b6370" />
        <stop offset="1" stopColor="#33393f" />
      </linearGradient>
      <linearGradient id="fold" gradientUnits="userSpaceOnUse" x1="818" y1="400" x2="862" y2="397">
        <stop offset="0" stopColor="#3a434b" />
        <stop offset="1" stopColor={FRONT} />
      </linearGradient>
      <linearGradient id="fall" x1="0" y1="0" x2="0" y2="1">
        <stop offset="0" stopColor="#626b78" />
        <stop offset=".45" stopColor="#5a626d" />
        <stop offset="1" stopColor="#434950" />
      </linearGradient>
      <linearGradient id="sink">
        <stop offset="0" stopColor="#737f8d" />
        <stop offset=".45" stopColor="#e8f3ff" />
        <stop offset=".6" stopColor="#a5b3c4" />
        <stop offset="1" stopColor="#7a8695" />
      </linearGradient>
    </defs>

    {/* rear foot, rib and skirt */}
    <g transform={CLIP}>
      <P d="905,440 1020,440 1075,450 1110,491 1194,511 1190,558 1150,597 1098,618 905,577" f={FRONT} />
      <P d="1018,445 1075,450 1108,491 1194,511 1152,548 1085,530" f={TOP} />
      <P d="1018,445 1075,450 1108,491 1085,530" f="#93a0b0" />
      <P d="1194,511 1190,558 1150,597 1150,547" f={OLIVE} />
      <P d="700,430 912,440 897,752 868,752 858,738 728,712 700,700" f={FRONT} />
      <P d="758,440 780,440 764,706 742,703" f="#75818d" />
      <P d="835,455 852,455 868,745 860,738" f={DARK} />
      <P d="852,455 908,455 897,752 868,752" f="#6d7884" />
      <P d="907,455 912,455 904,640 900,640" f={DARK} />
      <P d="735,470 745,460 730,708 745,712 726,714" f="#434b54" />
      <P d="380,740 530,660 740,450 728,700 715,912 680,922 650,924 630,920 513,898 400,780" f={SIDE} />
      <P d="655,590 735,480 728,700 715,912 680,922 650,924 632,920" f="#6f7b87" />
      <P d="535,700 560,680 552,900 528,895" f="#75818e" />
    </g>

    <g transform={UPPER}>
      {/* far right block and rear tower */}
      <P d="1240,570 1370,600 1353,865 1318,893 1240,875" f={SIDE} />
      <P d="1248,572 1370,600 1330,637 1240,618" f={TOP} />
      <P d="1370,600 1330,637 1318,893 1353,865" f="#5d6872" />
      <P d="1293,345 1278,550 1262,575 1245,572 1200,420" f="#606b77" />
      <P d="1165,300 1210,300 1268,315 1293,345 1240,395 1180,430 1095,358" f={TOP} />
      <P d="1240,395 1293,345 1278,550 1250,572" f={FRONT} />

      {/* lower and upper drum */}
      <path d="M905 640H1215L1200 980Q1040 1030 868 980Z" fill="url(#cyl)" />
      <P d="1187,650 1245,620 1245,700 1187,690" f="#5d6873" />
      <path d="M860 465L1187 480L1185 680Q1040 705 915 675L862 650Z" fill="url(#cyl)" />
      <P d="858,465 872,485 864,655 852,635" f={DARK} />

      {/* boss deck */}
      <path
        d="M650 335L720 315L800 300L890 225L1000 255Q1023 262 1023 272L935 350L980 360Q1050 350 1100 358L1195 380L1187 497Q1110 523 1020 523Q930 512 885 493Q872 488 858 465L690 427Q622 405 622 375Z"
        fill={TOP}
      />
      <P d="1023,270 1020,335 998,357 932,350" f={FRONT} />
      <P d="895,262 912,265 848,325 815,325" f="#9ba8b7" />
      <ellipse cx="768" cy="378" rx="93" ry="38" fill="url(#sink)" />
      <ellipse cx="767" cy="393" rx="71" ry="24" fill="url(#bore)" />
      <path d="M906 432Q912 390 1030 389Q1075 392 1098 405L1187 425L1187 497L1095 483Q1050 488 985 483Q910 468 906 432Z" fill="url(#bore)" />
      <P d="1098,405 1187,425 1187,497 1092,480" f={FRONT} />
      <P d="1095,480 1183,500 1187,520 1060,510" f={TOP} />
      <P d="1118,362 1195,380 1187,425 1100,404" f="#8490a0" />
      <P d="1222,355 1236,390 1250,620 1198,672 1185,672 1188,400" f="#656c7a" />

      {/* box on the drum */}
      <P d="1008,690 1215,737 1205,992 1018,950" f={SIDE} />
      <path d="M1008 690Q1100 692 1170 677L1257 697L1215 737Z" fill={TOP} />
      <P d="1257,697 1243,960 1205,992 1215,737" f="#5d6872" />

      {/* boss wall and web */}
      <P d="620,375 640,405 690,427 858,465 852,640 915,680 690,760 600,760 560,560" f="url(#boss)" />
      <P d="655,322 805,185 890,122 898,265 822,327 720,318" f={FRONT} />
      <P d="340,595 575,388 620,378 620,560 440,800 200,800 240,640" f={FRONT} />
      <P d="585,388 620,378 620,545 585,545" f="#74808e" />
      <P d="595,388 608,385 608,540 595,540" f="#8794a3" />

      {/* top rail */}
      <path
        d="M80 632L82 595Q95 565 130 545L660 82Q680 66 705 66L735 70L740 97L890 120L815 182L655 330L620 378L575 388L343 595L190 575Z"
        fill={TOP}
      />
      <path d="M82 605Q88 570 110 550L660 82Q680 64 710 66L700 105L190 545L130 543Z" fill="url(#edge)" />
      <path d="M735 70L740 97L890 120L815 182Q710 150 700 125Q695 95 735 70Z" fill="#8996a2" />
      <path d="M735 70Q700 90 700 125L712 130Q715 105 742 97Z" fill="#6d7884" />
      <path d="M455 330Q465 290 540 285L665 305L650 335L615 380L575 383L470 350Z" fill="#8996a2" />
      <path d="M455 330Q470 288 540 286L665 305L660 318L550 305Q500 310 468 348Z" fill="#74808e" />
      <path d="M470 345Q500 305 555 307L655 322" fill="none" stroke="#9aa7b7" strokeWidth="6" />
      <path d="M520 309Q545 303 575 309" fill="none" stroke="#e6eef8" strokeWidth="5" />
      <path d="M190 572Q210 500 320 498L422 514L343 595Z" fill="#8996a2" />
      <path d="M190 572Q210 500 320 498L422 514L415 525L320 515Q230 525 200 577Z" fill="#74808e" />
      <path d="M200 570Q240 512 330 515L415 526" fill="none" stroke="#9aa7b7" strokeWidth="6" />
      <path d="M295 519Q325 514 350 518" fill="none" stroke="#e6eef8" strokeWidth="5" />

      {/* front end */}
      <P d="78,632 82,600 100,565 130,543 188,545 205,577 343,595 340,690" f="#6b7580" />
    </g>

    {/* base plate */}
    <g transform={LEFT}>
      <P d="50,880 540,455 660,480 660,900 540,1100 480,985" f={TOP} />
      <ellipse cx="600" cy="610" rx="98" ry="43" fill="url(#bore)" />
      <path d="M385 602L490 620Q550 640 547 670Q530 715 390 710Z" fill="#8996a2" />
      <path d="M385 602L490 620Q550 640 547 670Q535 690 528 655Q500 630 385 622Z" fill="#6b7683" />
      <ellipse cx="448" cy="759" rx="92" ry="42" fill="url(#socket)" />

      {/* rear post */}
      <P d="553,185 650,215 650,515 605,495 537,473" f={FRONT} />
      <P d="553,185 566,185 555,475 537,473" f="#4b555f" />
      <P d="620,205 650,218 650,515 625,508 604,492" f="url(#boss)" />
      <P d="553,183 580,163 650,175 650,218 620,206" f={TOP} />

      {/* front left post */}
      <P d="130,565 190,575 180,860 113,846" f={FRONT} />
      <P d="130,565 142,567 127,848 113,846" f="#4b555f" />
      <P d="130,560 165,532 280,545 380,575 388,590 340,610 200,580" f={TOP} />
      <path d="M190 570H345L330 890Q220 905 174 858Z" fill="url(#post)" />
      <ellipse cx="267" cy="568" rx="77" ry="29" fill="#8795a2" />
      <P d="315,602 345,585 375,600 405,652 413,895 330,897" f="#76818f" />
      <P d="315,602 345,605 350,897 326,897" f="#66717d" />
      <P d="315,602 345,572 380,578 388,590 385,612 345,608" f={TOP} />
      <P d="385,612 405,652 415,893 385,895" f="#697383" />

      {/* pegs below the plate */}
      <P d="108,1035 205,1060 207,1160 145,1147 108,1075" f={FRONT} />
      <P d="108,1035 132,1040 145,1147 108,1075" f="#444d56" />
      <path d="M203 1050L410 1090L405 1165Q395 1195 370 1195L232 1195Q208 1185 207 1160Z" fill="url(#post)" />
      <path d="M335 1080L405 1090L405 1165Q395 1195 370 1195L330 1190Z" fill="#75818f" />

      {/* bent profile */}
      <path d="M480 980L640 850L632 1115Q620 1160 592 1162Q550 1160 540 1110L525 1020Z" fill="url(#bend)" />
      <path
        d="M50 880L480 980Q515 990 525 1025L540 1110Q555 1160 592 1162Q625 1155 630 1110L650 30L910 90L920 700L970 970L665 1238Q640 1268 590 1268Q500 1262 455 1200Q432 1165 428 1110Q420 1085 395 1088L375 1100L52 1025Z"
        fill={FRONT}
      />
      <P d="650,30 690,42 672,1200 640,1100" f="#67717b" />
      <P d="690,80 700,62 725,50 790,66 806,100 850,600 875,650 680,830" f={SIDE} />
      <P d="686,360 815,250 850,600 910,690 676,835" f="#646975" />
      <path d="M690 82Q700 52 725 50L745 53Q705 60 690 95Z" fill={DARK} />
      <path d="M793 66L840 80L884 590Q890 640 910 660V690Q855 655 848 600L806 100Z" fill="url(#fold)" />
      <P d="672,1160 945,920 970,970 665,1238" f="url(#heel)" />
    </g>

    {/* clip */}
    <g transform={CLIP}>
      <P d="170,135 220,150 300,262 455,762 440,800 385,795 220,760 218,745 195,690" f={FRONT} />
      <path
        d="M285 262L545 60L560 110L520 200L430 300V360L485 440L490 520L430 600L405 670L385 710L283 688L250 650V570L210 470L215 400L250 345L285 330Z"
        fill="url(#chan)"
      />
      <P d="290,262 540,42 570,60 570,95 290,325" f="#5f6673" />
      <P d="548,55 578,52 578,92 560,100" f="#7b8796" />
      <P d="540,100 570,95 700,90 560,175 505,220 503,180" f={FRONT} />
      <P d="505,170 518,150 515,215 505,222" f="#7b8796" />

      {/* ledge running up to the boss */}
      <P d="230,200 470,-8 490,-8 540,30 540,45 290,262 158,237 190,207" f={TOP} />
      <P d="230,204 468,0 484,2 240,214" f="#a1aebd" />

      <P d="155,237 258,262 258,325 215,365 195,420 205,485 248,570 170,560" f={FRONT} />
      <path d="M258 262H290L285 330Q225 370 222 430Q226 490 262 545Q280 565 280 580V640L250 650L248 572Q196 490 195 430Q200 355 258 325Z" fill="#7a8694" />
      <P d="280,635 478,465 492,520 430,600 415,665 385,710 283,688 250,650" f={TOP} />
      <P d="290,665 388,680 382,710 283,688" f="#96a3b3" />

      {/* prongs */}
      <P d="430,295 530,300 545,600 455,762 388,750 388,708 420,685 420,600 470,560 493,490 485,430 430,370" f={FRONT} />
      <path d="M430 295L446 300V362Q495 420 495 490Q488 560 425 600V670L405 675V600Q480 555 480 490Q475 420 428 360Z" fill="#4a545e" />
      <path d="M480 440Q495 460 495 490Q488 560 425 600V683L382 706V680L405 665V600Q480 555 480 490Z" fill="#77828e" />
      <P d="404,615 425,600 425,665 404,672" f="#505a64" />
      <P d="522,315 582,315 560,535 505,650" f="#727e89" />
      <P d="580,315 680,240 665,450 600,622 530,700 455,762 510,630 560,535" f="url(#fall)" />
      <P d="622,280 636,268 600,520 575,540" f="#697481" />
      <P d="622,210 668,172 745,178 797,135 780,370 745,440 660,590 600,622 660,440 680,240" f="#69747f" />
      <P d="748,180 797,135 780,370 728,410" f="#646d7a" />
      <P d="728,400 780,372 745,440 660,590 655,560" f="#474e57" />
      <P d="600,622 648,585 665,440 630,520" f={SIDE} />
      <P d="622,210 668,173 668,230" f="#5a6570" />
      <P d="430,295 555,168 578,172 680,82 730,88 745,120 797,135 745,182 668,175 622,210 680,240 582,318 522,322" f={TOP} />
      <P d="505,208 522,205 522,215 508,228" f="#2e363c" />

      {/* hook */}
      <P d="187,828 345,865 370,828 390,900 355,1045 280,1040 250,970 190,860" f={FRONT} />
      <P d="220,760 385,795 345,865 187,828" f={LIGHT} />
      <P d="385,750 440,762 412,780 370,828 385,795" f={FRONT} />
      <P d="412,777 565,975 640,993 638,1040 593,1077 540,1098 280,1040 345,1043 370,828" f={FRONT} />
      <P d="345,865 370,828 355,1045 338,990" f="#5a6470" />
      <P d="253,970 338,990 355,1045 278,1030" f="#394148" />
      <P d="412,777 567,978 508,1012 370,828" f={LIGHT} />
      <P d="508,1012 567,977 642,993 595,1030" f={TOP} />
      <P d="642,993 638,1042 593,1077 593,1030" f={OLIVE} />
    </g>

    {/* highlighted round */}
    <g transform={LEFT} fill="none" stroke="#17a52b" strokeWidth="3">
      <path d="M365 752Q460 746 535 766L572 776Q588 790 580 800Q560 806 540 798Q460 774 365 778Q346 768 365 752ZM381 752V778M553 772Q538 785 540 798" />
    </g>
  </svg>
);

/* ---------- graphics area ---------- */

const viewTools = [
  { icon: "zoomFit", w: "w-[30px]" },
  { icon: "zoomIn", w: "w-[30px]" },
  { icon: "zoomOut", w: "w-[30px]" },
  { icon: "repaint", w: "w-[30px]" },
  { icon: "shading", w: "w-[35px]", menu: true },
  { icon: "views", w: "w-[35px]", menu: true },
  { icon: "viewList", w: "w-[35px]", menu: true },
  { icon: "camera", w: "w-[30px]" },
  { icon: "persp", w: "w-[30px]" },
  { icon: "datums", w: "w-[35px]", menu: true },
];

const layerTabs = [
  { label: "001_Asm", w: "w-[69px]" },
  { label: "002_Drw", w: "w-[69px]" },
  { label: "003_Work", w: "w-[76px]" },
  { label: "004_Datums", w: "w-[89px]" },
  { label: "010_General_Notes", w: "w-[126px]" },
  { label: "020_Key_Char_A_B_C", w: "w-[135px]" },
  { label: "030_Finish", w: "w-[76px]" },
  { label: "100_Split", w: "w-[69px]" },
  { label: "110_Molding", w: "w-[90px]" },
  { label: "120_Markings", w: "w-[96px]" },
  { label: "130_Measuring_Dev", w: "w-[131px]" },
];

const navArrows = [
  { d: "M7 1v8L1 5zM13 1v8L7 5z", c: "fill-[#555]", label: "First" },
  { d: "M10 1v8L3 5z", c: "fill-[#a5a5a5]", label: "Previous" },
  { d: "M4 1v8l7-4z", c: "fill-[#a5a5a5]", label: "Next" },
  { d: "M1 1v8l6-4zM7 1v8l6-4z", c: "fill-[#555]", label: "Last" },
];

const Viewport = () => (
  <main className="flex min-w-0 flex-1 flex-col border-l-2 border-[#b9bbbc] bg-[#e8eaee]">
    <div className="relative flex min-h-0 flex-1 items-start justify-center">
      <RockerArm />
      <div className="relative mt-[7px] flex h-[35px] items-center border border-[#c6c7c8] bg-[#f8f8f8] pl-0.5 pr-0.5">
        {viewTools.map((t) => (
          <button key={t.icon} className={`relative flex h-8 items-center pl-[7px] ${t.w}`} aria-label={t.icon}>
            <Icon name={t.icon} />
            {t.menu && (
              <svg width="4" height="4" viewBox="0 0 4 4" className="absolute bottom-1 right-1.5">
                <path d="M4 0v4H0z" fill="#555" />
              </svg>
            )}
          </button>
        ))}
        <button className="mx-0.5 flex size-[27px] items-center justify-center border border-[#a9abad] bg-[#dcdee0]" aria-label="Annotations">
          <Icon name="annot" />
        </button>
        <button className="flex h-8 w-[30px] items-center justify-center" aria-label="Spin center">
          <Icon name="spin" />
        </button>
      </div>
    </div>
    <div className="h-2 border-t border-[#858585] bg-[#f4f4f4]" />
    <div className="flex h-7 items-start border-y border-[#858585] bg-[#dedede] text-[#444]">
      <div className="flex h-full items-center gap-[7px] pl-1.5 pr-3">
        {navArrows.map((n) => (
          <button key={n.label} aria-label={n.label}>
            <svg width="14" height="10" viewBox="0 0 14 10" className={n.c}>
              <path d={n.d} />
            </svg>
          </button>
        ))}
      </div>
      <button className="h-[21px] w-6 border border-t-0 border-[#858585] text-[13px] leading-5 text-[#999]" aria-label="Add tab">
        +
      </button>
      {layerTabs.map((t) => (
        <button key={t.label} className={`h-[23px] shrink-0 border-b border-r border-b-[#858585] border-r-[#bdbdbd] ${t.w}`}>
          {t.label}
        </button>
      ))}
      <button className="-mt-px h-[26px] w-[105px] shrink-0 border-x border-b-2 border-[#858585] border-b-[#777] bg-[#f4f4f4] font-bold">
        Default All *
      </button>
    </div>
  </main>
);

const StatusBar = () => (
  <footer className="flex h-[43px] items-center border-t-2 border-[#b9bbbc] bg-[#f1f1f1] pl-1.5 pr-[19px] pt-1 text-[#444]">
    <button className="mr-2 flex size-[26px] items-center justify-center border border-[#a9abad] bg-[#dfe1e3] pl-1" aria-label="Model tree">
      <Icon name="tree" />
    </button>
    <button className="mr-3.5" aria-label="Browser">
      <Icon name="globe" />
    </button>
    <button className="mr-3.5" aria-label="Full screen">
      <svg width="16" height="16" viewBox="0 0 16 16">
        <rect x=".8" y=".8" width="14.400" height="14.400" fill="#e3edf3" stroke="#2a759e" strokeWidth="1.400" />
      </svg>
    </button>
    <span className="mr-auto h-[26px] w-px bg-[#c8c8c8]" />
    <span className="mr-10 h-[30px] w-px bg-[#d0d0d0]" />
    <div className="flex h-7 border border-[#c6c6c6] bg-[#fafafa]">
      <button className="flex w-8 items-center justify-center" aria-label="Find">
        <Icon name="binoculars" />
      </button>
      <button className="flex w-[19px] items-center justify-center border-l border-[#c6c6c6]" aria-label="Find options">
        <Arrow />
      </button>
    </div>
    <span className="ml-2 w-[84px]">1 selected</span>
    <div className="relative h-[27px] w-[168px]">
      <select aria-label="Selection filter" className="h-full w-full appearance-none border border-[#aaa] bg-[#f8f8f8] pl-2.5">
        <option>Geometry</option>
      </select>
      <span className="pointer-events-none absolute inset-y-px right-px flex w-[18px] items-center justify-center border-l border-[#bbb]">
        <Arrow />
      </span>
    </div>
  </footer>
);

const Cursor = () => (
  <svg width="16" height="22" viewBox="0 0 16 22" className="pointer-events-none absolute left-[317px] top-[386px]" aria-hidden="true">
    <path d="M1 1v16l4-4 3 7 3-1-3-6.500h5z" fill="#fff" stroke="#333" strokeWidth="1.100" />
  </svg>
);

const App = () => (
  <div className="relative flex h-screen flex-col overflow-hidden bg-[#f4f4f4] font-['Open_Sans','Noto_Sans',sans-serif] text-[11px] text-[#444]">
    <TitleBar />
    <RibbonTabs />
    <Ribbon />
    <div className="flex min-h-0 flex-1">
      <TreePanel />
      <Viewport />
    </div>
    <StatusBar />
    <Cursor />
  </div>
);

export default App;
